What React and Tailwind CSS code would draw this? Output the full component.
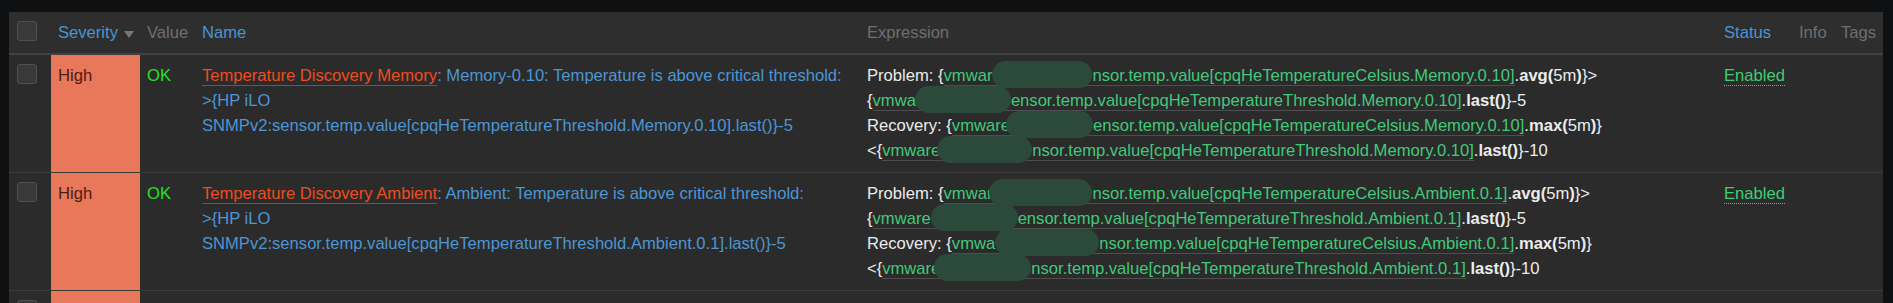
import React from "react"

// trigger list, dark theme
const cols = "grid grid-cols-[42px_89px_55px_665px_857px_75px_42px_49px]"

const rows = [
  {
    name: "Temperature Discovery Memory",
    desc: [": Memory-0.10: Temperature is above critical threshold:", ">{HP iLO", "SNMPv2:sensor.temp.value[cpqHeTemperatureThreshold.Memory.0.10].last()}-5"],
    expr: [
      { pre: "Problem: {", a: "vmwar", blob: [100, 0], b: "nsor.temp.value[cpqHeTemperatureCelsius.Memory.0.10]", fn: "avg", arg: "5m", post: "}>" },
      { pre: "{", a: "vmwa", blob: [96, -1], b: "ensor.temp.value[cpqHeTemperatureThreshold.Memory.0.10]", fn: "last", post: "}-5" },
      { pre: "Recovery: {", a: "vmware", blob: [87, -4], b: "ensor.temp.value[cpqHeTemperatureCelsius.Memory.0.10]", fn: "max", arg: "5m", post: "}" },
      { pre: "<{", a: "vmware", blob: [95, -3], b: "nsor.temp.value[cpqHeTemperatureThreshold.Memory.0.10]", fn: "last", post: "}-10" },
    ],
  },
  {
    name: "Temperature Discovery Ambient",
    desc: [": Ambient: Temperature is above critical threshold:", ">{HP iLO", "SNMPv2:sensor.temp.value[cpqHeTemperatureThreshold.Ambient.0.1].last()}-5"],
    expr: [
      { pre: "Problem: {", a: "vmwar", blob: [103, -3], b: "nsor.temp.value[cpqHeTemperatureCelsius.Ambient.0.1]", fn: "avg", arg: "5m", post: "}>" },
      { pre: "{", a: "vmware", blob: [87, 0], b: "ensor.temp.value[cpqHeTemperatureThreshold.Ambient.0.1]", fn: "last", post: "}-5" },
      { pre: "Recovery: {", a: "vmwa", blob: [104, 0], b: "nsor.temp.value[cpqHeTemperatureCelsius.Ambient.0.1]", fn: "max", arg: "5m", post: "}" },
      { pre: "<{", a: "vmware", blob: [97, -6], b: "nsor.temp.value[cpqHeTemperatureThreshold.Ambient.0.1]", fn: "last", post: "}-10" },
    ],
  },
]

function Checkbox() {
  return <span className="block w-[20px] h-[20px] rounded-[3px] bg-[#393939] border border-[#505050]" />
}

function Blob({ w, ml }) {
  return (
    <span
      className="inline-block h-[27px] -my-[2px] rounded-full bg-[#2c4a3b] align-middle relative -top-[2px]"
      style={{ width: w, marginLeft: ml }}
    />
  )
}

function ExprLine({ l }) {
  return (
    <div className="whitespace-nowrap text-[#ececec]">
      {l.pre}
      <span className="text-[#41c97a] border-b border-[#4e4e4e]">
        {l.a}
        <Blob w={l.blob[0]} ml={l.blob[1]} />
        {l.b}
      </span>
      .
      {l.arg ? (
        <>
          <b>{l.fn}(</b>
          {l.arg}
          <b>)</b>
        </>
      ) : (
        <b>{l.fn}()</b>
      )}
      {l.post}
    </div>
  )
}

function Row({ r }) {
  return (
    <div className={`${cols} bg-[#2b2b2b] border-b border-[#3a3a3a] h-[118px]`}>
      <div className="pl-[8px] pt-[9px]">
        <Checkbox />
      </div>
      <div className="bg-[#e9775a] pl-[7px] pt-[8px] text-[#4a1d12]">High</div>
      <div className="pl-[7px] pt-[8px] text-[#22e322]">OK</div>
      <div className="pl-[7px] pt-[8px] text-[#4b96d4]">
        <div className="whitespace-nowrap">
          <span className="text-[#ef4b1f] border-b border-[#5c5c5c]">{r.name}</span>
          {r.desc[0]}
        </div>
        <div className="whitespace-nowrap">{r.desc[1]}</div>
        <div className="whitespace-nowrap">{r.desc[2]}</div>
      </div>
      <div className="pl-[7px] pt-[8px]">
        {r.expr.map((l, i) => (
          <ExprLine key={i} l={l} />
        ))}
      </div>
      <div className="pl-[7px] pt-[8px]">
        <span className="text-[#3fce73] border-b border-dotted border-[#3fce73]">Enabled</span>
      </div>
      <div />
      <div />
    </div>
  )
}

export default function App() {
  return (
    <div
      className="h-[303px] overflow-hidden bg-[#0f1012] pt-[12px] pl-[9px] text-[16.6px] leading-[25px]"
      style={{ fontFamily: '"Liberation Sans", Arial, sans-serif' }}
    >
      <div className="w-[1874px]">
        {/* Header */}
        <div className={`${cols} bg-[#2e2e2e] border-b-2 border-[#424242] h-[43px]`}>
          <div className="pl-[8px] pt-[9px]">
            <Checkbox />
          </div>
          <div className="pl-[7px] pt-[8px] text-[#4796d1] flex items-start gap-[6px] whitespace-nowrap">
            Severity
            <svg width="10" height="7" viewBox="0 0 10 7" className="mt-[11px]">
              <path d="M0 0H10L5 7Z" fill="#777" />
            </svg>
          </div>
          <div className="pl-[7px] pt-[8px] text-[#6e6e6e]">Value</div>
          <div className="pl-[7px] pt-[8px] text-[#4796d1]">Name</div>
          <div className="pl-[7px] pt-[8px] text-[#6e6e6e]">Expression</div>
          <div className="pl-[7px] pt-[8px] text-[#4796d1]">Status</div>
          <div className="pl-[7px] pt-[8px] text-[#6e6e6e]">Info</div>
          <div className="pl-[7px] pt-[8px] text-[#6e6e6e]">Tags</div>
        </div>

        {rows.map((r) => (
          <Row key={r.name} r={r} />
        ))}

        {/* next row, cut off */}
        <div className={`${cols} bg-[#2b2b2b] h-[118px]`}>
          <div className="pl-[8px] pt-[9px]">
            <Checkbox />
          </div>
          <div className="bg-[#e9775a]" />
        </div>
      </div>
    </div>
  )
}
